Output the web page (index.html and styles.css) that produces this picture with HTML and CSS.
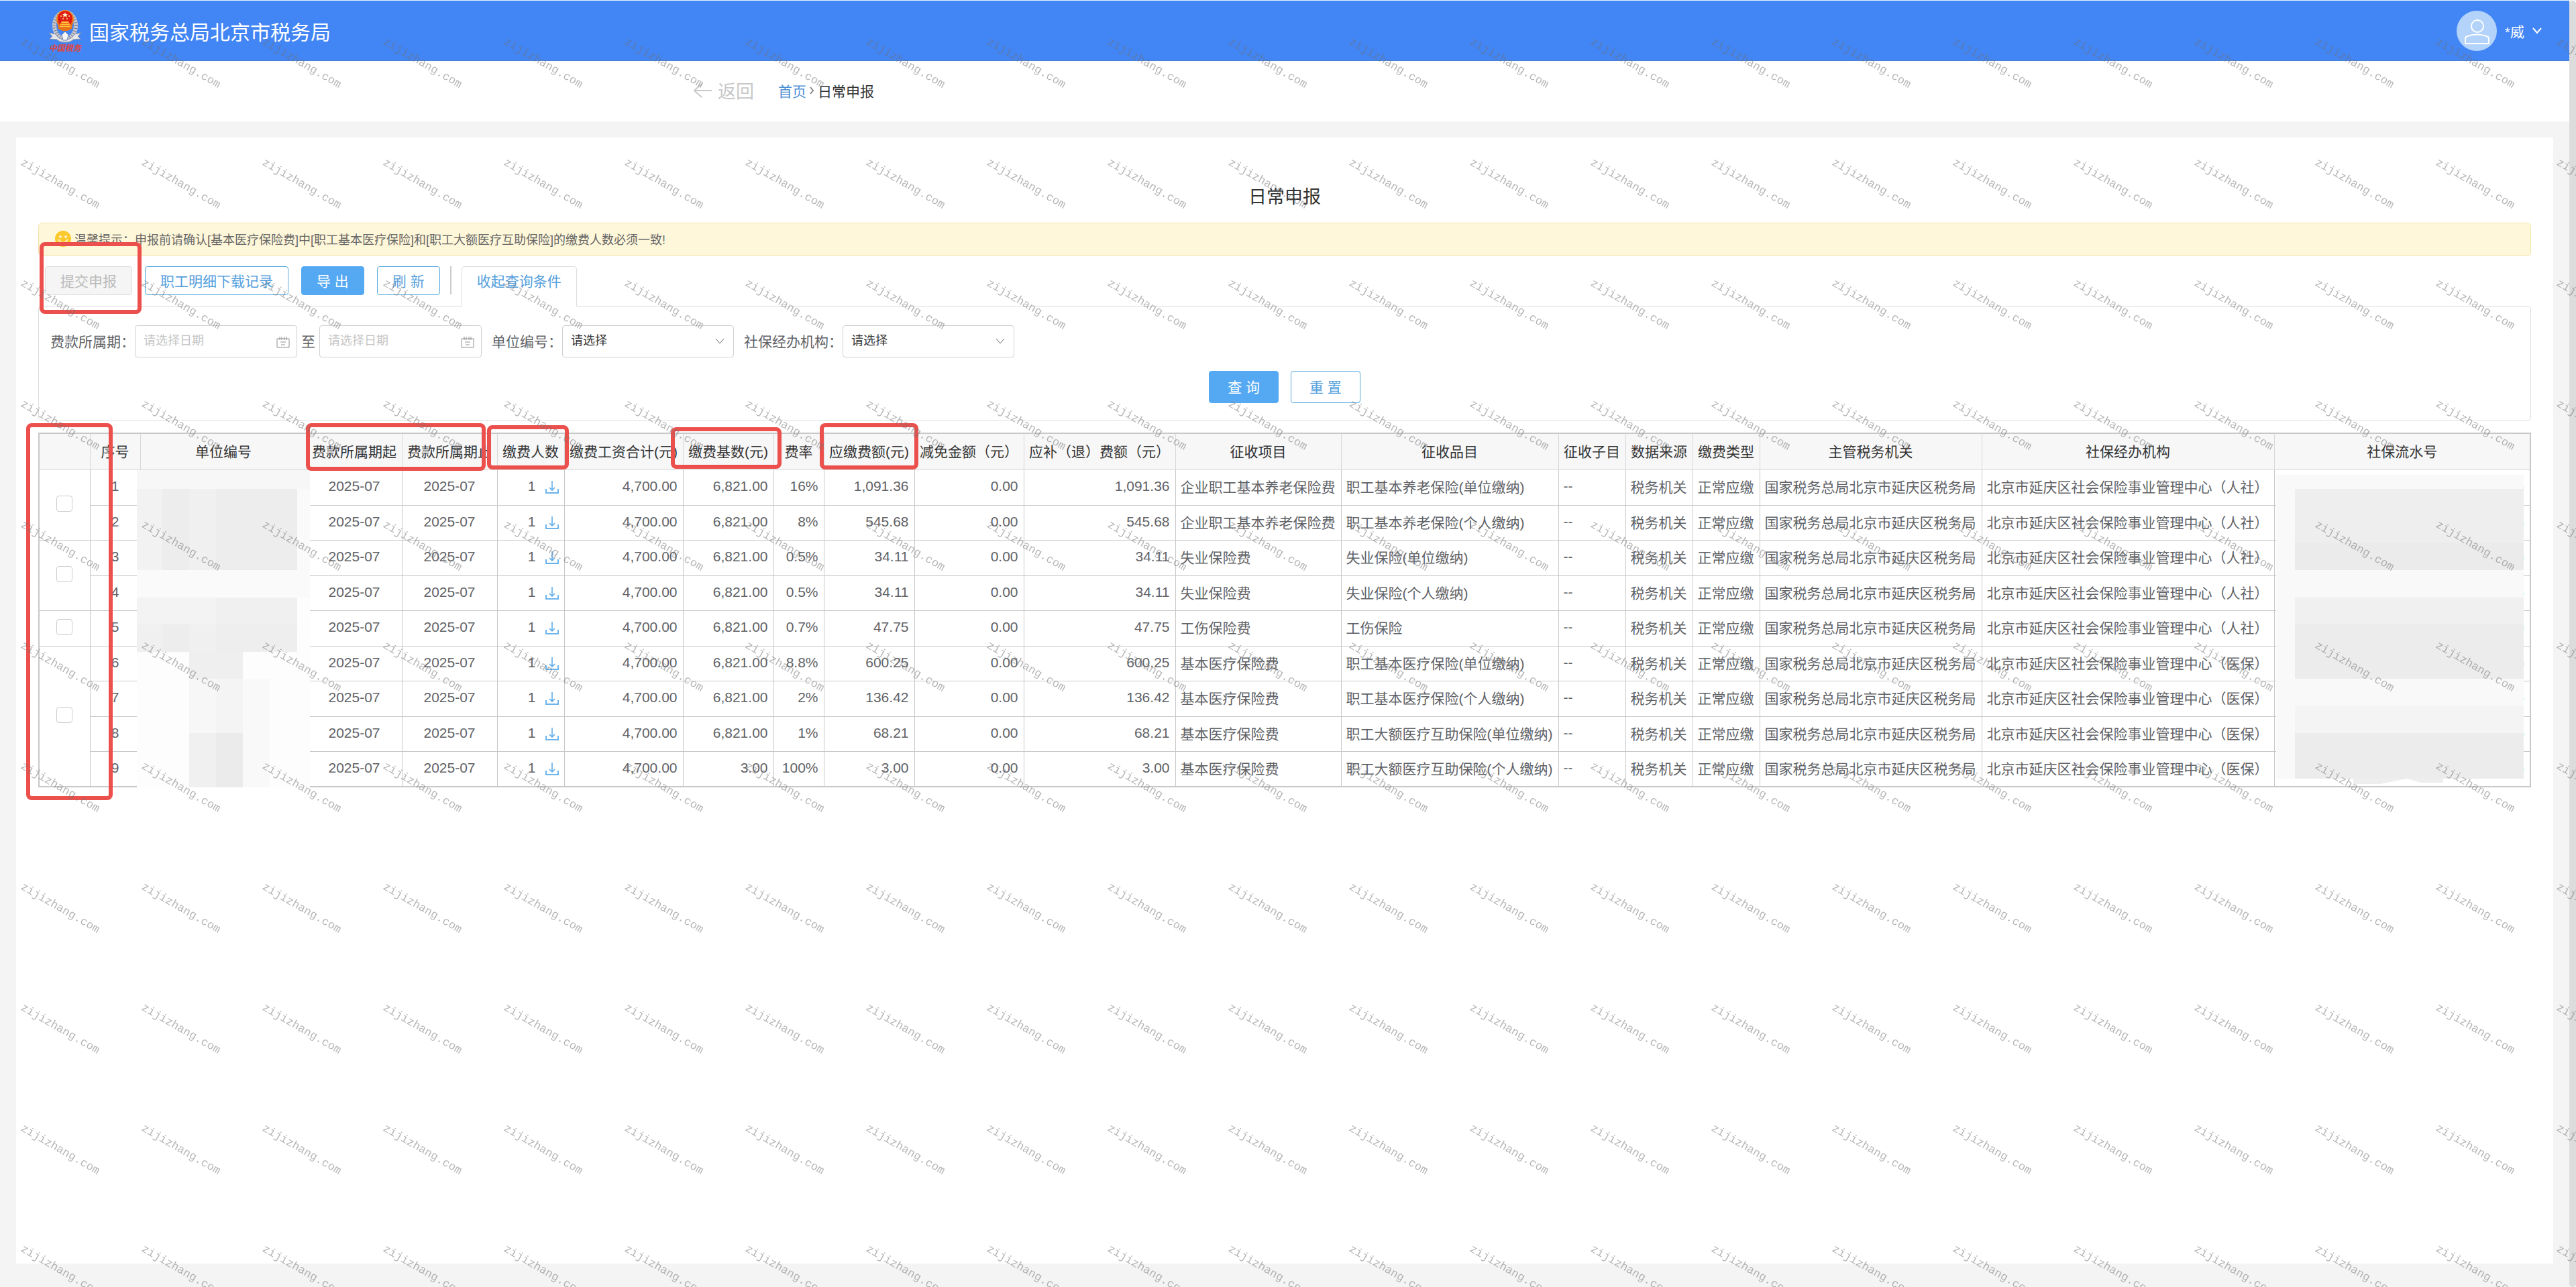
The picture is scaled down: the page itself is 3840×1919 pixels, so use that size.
FILE: index.html
```html
<!DOCTYPE html>
<html lang="zh-CN">
  <head>
    <meta charset="UTF-8" />
    <meta name="viewport" content="width=device-width, initial-scale=1.0" />
    <title>日常申报</title>

    <link rel="stylesheet" href="styles.css">
  </head>

  <body>
    <div class="page">
      <header class="header">
        <svg class="logo" viewBox="0 0 50 64" aria-hidden="true">
          <ellipse cx="25" cy="24" rx="16" ry="20" fill="none" stroke="#c9c9cf" stroke-width="6" />
          <ellipse cx="25" cy="24" rx="16" ry="20" fill="none" stroke="#6d7596" stroke-width="5" stroke-dasharray="1 3" />
          <path d="M1 35l10 2c3 6 8 8 14 8s11-2 14-8l10-2-5 5 4 4-11 1c-3 3-7 4-12 4s-9-1-12-4L2 44l4-4z" fill="#e4e6ea" stroke="#8c90a0" stroke-width="1" />
          <path d="M25 33l5 5-2 8h-6l-2-8z" fill="#f5f5f5" stroke="#6b83bb" stroke-width="1" />
          <ellipse cx="25" cy="15" rx="13" ry="14" fill="#ef8a1c" />
          <path d="M13 17h24l-2 12-6 3h-8l-6-3z" fill="#e8731a" />
          <ellipse cx="25" cy="14" rx="11" ry="12" fill="#e01d14" />
          <path d="M25 4l1 3h3l-2 2 1 3-3-2-3 2 1-3-2-2h3z" fill="#fff3c4" />
          <circle cx="19" cy="10" r="1" fill="#ffe27a" />
          <circle cx="31" cy="10" r="1" fill="#ffe27a" />
          <circle cx="22" cy="14" r="1" fill="#ffe27a" />
          <circle cx="28" cy="14" r="1" fill="#ffe27a" />
          <path d="M20 18h10l1 2h-12zM18 21h14v2H18zM17 24h16v2H17z" fill="#ffc637" />
          <text class="logo-text" x="1" y="62">中国税务</text>
        </svg>
        <h1 class="org">国家税务总局北京市税务局</h1>
        <button class="user" type="button">
          <svg class="avatar" viewBox="0 0 60 60" aria-hidden="true">
            <circle cx="30" cy="30" r="30" fill="#b3d3fa" />
            <circle cx="31" cy="23" r="9" fill="none" stroke="#fff" stroke-width="2" />
            <path d="M13 49v-7q0-3 3-4q14-5 29 0q3 1 3 4v7z" fill="none" stroke="#fff" stroke-width="2" />
          </svg>
          <span class="user-name">*威</span>
          <svg class="user-arrow" viewBox="0 0 14 10" aria-hidden="true">
            <path d="M1 1l6 7 6-7" fill="none" stroke="#fff" stroke-width="2" />
          </svg>
        </button>
      </header>

      <nav class="crumbs">
        <a class="back" href="#">
          <svg class="back-arrow" viewBox="0 0 27 22" aria-hidden="true">
            <path d="M12 1L1 11l11 10M1 11h26" fill="none" stroke="#c8c8c8" stroke-width="2" />
          </svg>
          返回
        </a>
        <a class="home" href="#">首页</a>
        <svg class="crumb-sep" viewBox="0 0 7 12" aria-hidden="true">
          <path d="M1 1l4 5-4 5" fill="none" stroke="#888" stroke-width="2" />
        </svg>
        <span>日常申报</span>
      </nav>

      <main class="panel">
        <h2 class="title">日常申报</h2>

        <p class="notice">
          <svg class="smile" viewBox="0 0 24 24" aria-hidden="true">
            <circle cx="12" cy="12" r="12" fill="#fbc92d" />
            <circle cx="8" cy="9" r="2" fill="#fff3c9" />
            <circle cx="16" cy="9" r="2" fill="#fff3c9" />
            <path d="M5 13q7 10 14 0" fill="none" stroke="#fff3c9" stroke-width="2" />
          </svg>
          温馨提示：申报前请确认[基本医疗保险费]中[职工基本医疗保险]和[职工大额医疗互助保险]的缴费人数必须一致!
        </p>

        <div class="toolbar">
          <button class="btn btn-submit" type="button" disabled>提交申报</button>
          <button class="btn" type="button">职工明细下载记录</button>
          <button class="btn btn-primary" type="button">导 出</button>
          <button class="btn" type="button">刷 新</button>
          <span class="divider"></span>
          <button class="tab" type="button">收起查询条件</button>
          <span class="mark mark-submit"></span>
        </div>

        <form class="filters">
          <div class="fields">
            <label for="dateFrom">费款所属期：</label>
            <span class="field">
              <input class="control" id="dateFrom" type="text" placeholder="请选择日期" />
              <svg class="calendar" viewBox="0 0 20 18" aria-hidden="true">
                <path d="M1 4h18v13H1zM5 1v5M8 1v5M12 1v5M15 1v5M6 9h8M7 13h6" fill="none" stroke="#909090" stroke-width="1" />
              </svg>
            </span>
            <label class="to" for="dateTo">至</label>
            <span class="field">
              <input class="control" id="dateTo" type="text" placeholder="请选择日期" />
              <svg class="calendar" viewBox="0 0 20 18" aria-hidden="true">
                <path d="M1 4h18v13H1zM5 1v5M8 1v5M12 1v5M15 1v5M6 9h8M7 13h6" fill="none" stroke="#909090" stroke-width="1" />
              </svg>
            </span>
            <label class="next" for="unit">单位编号：</label>
            <span class="field field-select">
              <select class="control" id="unit"><option>请选择</option></select>
              <svg class="arrow" viewBox="0 0 14 10" aria-hidden="true">
                <path d="M1 1l6 7 6-7" fill="none" stroke="#666" stroke-width="1" />
              </svg>
            </span>
            <label class="next" for="agency">社保经办机构：</label>
            <span class="field field-select">
              <select class="control" id="agency"><option>请选择</option></select>
              <svg class="arrow" viewBox="0 0 14 10" aria-hidden="true">
                <path d="M1 1l6 7 6-7" fill="none" stroke="#666" stroke-width="1" />
              </svg>
            </span>
          </div>
          <div class="actions">
            <button class="btn btn-large btn-primary" type="button">查 询</button>
            <button class="btn btn-large" type="button">重 置</button>
          </div>
        </form>

        <div class="table-wrap">
          <table class="table">
            <colgroup>
              <col class="w76"><col class="w75"><col class="w248"><col class="w142"><col class="w142">
              <col class="w100"><col class="w177"><col class="w135"><col class="w75"><col class="w135">
              <col class="w163"><col class="w226"><col class="w247"><col class="w324"><col class="w100">
              <col class="w100"><col class="w100"><col class="w331"><col class="w436"><col>
            </colgroup>
            <thead>
              <tr>
                <th></th>
                <th>序号</th>
                <th>单位编号</th>
                <th>费款所属期起</th>
                <th>费款所属期止</th>
                <th>缴费人数</th>
                <th>缴费工资合计(元)</th>
                <th>缴费基数(元)</th>
                <th>费率</th>
                <th>应缴费额(元)</th>
                <th>减免金额（元）</th>
                <th>应补（退）费额（元）</th>
                <th>征收项目</th>
                <th>征收品目</th>
                <th>征收子目</th>
                <th>数据来源</th>
                <th>缴费类型</th>
                <th>主管税务机关</th>
                <th>社保经办机构</th>
                <th>社保流水号</th>
              </tr>
            </thead>
            <tbody id="rows"></tbody>
          </table>

          <!-- masked unit numbers -->
          <svg class="mask mask-unit" viewBox="0 0 258 473" aria-hidden="true">
            <rect width="258" height="473" fill="#fdfdfd" />
            <rect width="258" height="28" fill="#f7f7f7" />
            <rect y="28" width="38" height="121" fill="#f2f2f2" />
            <rect x="38" y="28" width="201" height="121" fill="#ededed" />
            <rect x="78" y="28" width="40" height="121" fill="#f0f0f0" />
            <rect x="239" y="28" width="19" height="121" fill="#fafafa" />
            <rect y="149" width="258" height="41" fill="#fafafa" />
            <rect y="190" width="239" height="40" fill="#f3f3f3" />
            <rect x="118" y="190" width="121" height="40" fill="#f0f0f0" />
            <rect y="230" width="239" height="41" fill="#f0f0f0" />
            <rect x="38" y="230" width="40" height="41" fill="#ededed" />
            <rect x="118" y="230" width="121" height="41" fill="#eee" />
            <rect x="78" y="271" width="80" height="40" fill="#efefef" />
            <rect x="78" y="311" width="120" height="81" fill="#f7f7f7" />
            <rect x="118" y="311" width="40" height="81" fill="#f4f4f4" />
            <rect x="158" y="311" width="40" height="162" fill="#f9f9f9" />
            <rect x="78" y="392" width="40" height="81" fill="#f0f0f0" />
            <rect x="118" y="392" width="40" height="81" fill="#ebebeb" />
          </svg>

          <!-- masked serial numbers -->
          <svg class="mask mask-serial" viewBox="0 0 369 462" aria-hidden="true">
            <rect width="369" height="453" fill="#f9f9f9" />
            <rect x="28" y="21" width="341" height="121" fill="#eee" />
            <rect x="28" y="101" width="341" height="41" fill="#ebebeb" />
            <rect x="28" y="183" width="341" height="40" fill="#f0f0f0" />
            <rect x="28" y="223" width="341" height="81" fill="#ececec" />
            <rect x="28" y="344" width="341" height="41" fill="#f4f4f4" />
            <rect x="28" y="385" width="341" height="68" fill="#ececec" />
            <path d="M115 453h134v6h-34l-20-6-40 8h-40z" fill="#eee" />
          </svg>

          <span class="mark mark-check"></span>
          <span class="mark mark-period"></span>
          <span class="mark mark-people"></span>
          <span class="mark mark-base"></span>
          <span class="mark mark-due"></span>
        </div>
      </main>
    </div>

    <div class="scrollbar"></div>

    <svg class="watermark" aria-hidden="true">
      <defs>
        <pattern id="wm" width="180" height="180" patternUnits="userSpaceOnUse">
          <text class="watermark-text" x="30" y="65" transform="rotate(30 30 65)">zijizhang.com</text>
        </pattern>
      </defs>
      <rect width="100%" height="100%" fill="url(#wm)" />
    </svg>

    <!-- JS -->
    <script>
      // base, rate, due, item, sub item, agency, rows covered by the checkbox
      const data = [
        ['6,821.00', '16%', '1,091.36', '企业职工基本养老保险费', '职工基本养老保险(单位缴纳)', '人社', 2],
        ['6,821.00', '8%', '545.68', '企业职工基本养老保险费', '职工基本养老保险(个人缴纳)', '人社', 0],
        ['6,821.00', '0.5%', '34.11', '失业保险费', '失业保险(单位缴纳)', '人社', 2],
        ['6,821.00', '0.5%', '34.11', '失业保险费', '失业保险(个人缴纳)', '人社', 0],
        ['6,821.00', '0.7%', '47.75', '工伤保险费', '工伤保险', '人社', 1],
        ['6,821.00', '8.8%', '600.25', '基本医疗保险费', '职工基本医疗保险(单位缴纳)', '医保', 4],
        ['6,821.00', '2%', '136.42', '基本医疗保险费', '职工基本医疗保险(个人缴纳)', '医保', 0],
        ['6,821.00', '1%', '68.21', '基本医疗保险费', '职工大额医疗互助保险(单位缴纳)', '医保', 0],
        ['3.00', '100%', '3.00', '基本医疗保险费', '职工大额医疗互助保险(个人缴纳)', '医保', 0],
      ];

      const icon = `<a class="download" href="#" aria-label="下载"><svg viewBox="0 0 20 19">
        <path d="M10 0v14M6 10l4 4 4-4" fill="none" stroke="#55a8ea" stroke-width="1.5" />
        <path d="M1 12v6h18v-6" fill="none" stroke="#6cb4ee" stroke-width="2" /></svg></a>`;

      document.querySelector('#rows').innerHTML = data
        .map(([base, rate, due, item, sub, agency, span], i) => `
          <tr>
            ${span ? `<td class="center" rowspan="${span}"><input class="check" type="checkbox" aria-label="选择第${i + 1}行" /></td>` : ''}
            <td class="center">${i + 1}</td>
            <td></td>
            <td class="center">2025-07</td>
            <td class="center">2025-07</td>
            <td class="num">1${icon}</td>
            <td class="num">4,700.00</td>
            <td class="num">${base}</td>
            <td class="num">${rate}</td>
            <td class="num">${due}</td>
            <td class="num">0.00</td>
            <td class="num">${due}</td>
            <td>${item}</td>
            <td>${sub}</td>
            <td>--</td>
            <td>税务机关</td>
            <td>正常应缴</td>
            <td>国家税务总局北京市延庆区税务局</td>
            <td>北京市延庆区社会保险事业管理中心（${agency}）</td>
            <td class="num"><a class="serial" href="#">5</a></td>
          </tr>`)
        .join('');
    </script>
  </body>
</html>
```
FILE: styles.css
```css
* {
  margin: 0;
  padding: 0;
  box-sizing: border-box;
}
body {
  position: relative;
  display: flex;
  min-height: 100vh;
  background: #f4f4f4;
  color: #333;
  font-family: "Liberation Sans", "Noto Sans CJK SC", sans-serif;
  font-size: 21px;
}
button,
input,
select {
  font-family: inherit;
}
a {
  text-decoration: none;
}
svg {
  display: block;
  flex: none;
}

.page {
  display: flex;
  flex: 1;
  flex-direction: column;
  min-width: 0;
}
.scrollbar {
  width: 10px;
  margin-top: 1px;
  background: #dcdcdc;
  border-radius: 5px;
}

/* header */
.header {
  display: flex;
  align-items: center;
  height: 91px;
  padding: 0 41px 0 72px;
  background: #4285f4;
  border-top: 1px solid #e4f3fb;
  border-bottom: 1px solid #4a80d0;
  color: #fff;
}
.logo {
  width: 50px;
  height: 64px;
}
.logo-text {
  fill: #e0443c;
  font-size: 12px;
  font-style: italic;
  font-weight: 700;
}
.org {
  flex: 1;
  margin-left: 11px;
  font-size: 30px;
  font-weight: 400;
}
.user {
  display: flex;
  align-items: center;
  background: none;
  border: 0;
  color: inherit;
  font-size: 21px;
}
.avatar {
  width: 60px;
  height: 60px;
}
.user-name {
  margin: 0 12px;
}
.user-arrow {
  width: 14px;
  height: 10px;
}

/* breadcrumb */
.crumbs {
  display: flex;
  align-items: center;
  height: 90px;
  padding: 0 0 3px 27%;
  background: #fff;
}
.back {
  display: flex;
  align-items: center;
  gap: 9px;
  margin-right: 36px;
  color: #c8c8c8;
  font-size: 27px;
}
.back-arrow {
  width: 27px;
  height: 22px;
}
.home {
  color: #4a8fd4;
}
.crumb-sep {
  width: 7px;
  height: 12px;
  margin: 0 5px;
}

/* content */
.panel {
  flex: 1;
  margin: 24px 24px 35px;
  padding: 64px 33px 0;
  background: #fff;
}
.title {
  height: 63px;
  font-size: 27px;
  font-weight: 400;
  line-height: 50px;
  text-align: center;
}
.notice {
  display: flex;
  align-items: center;
  gap: 5px;
  height: 50px;
  padding: 0 24px 2px;
  background: #fff7d9;
  border: 1px solid #f3e3a9;
  border-radius: 6px;
  color: #666;
  font-size: 18px;
}
.smile {
  width: 24px;
  height: 24px;
}

.toolbar {
  position: relative;
  display: flex;
  gap: 19px;
  margin-top: 15px;
  padding-left: 10px;
}
.btn {
  height: 43px;
  padding: 0 22px 2px;
  background: #fff;
  border: 1px solid #55a8dd;
  border-radius: 4px;
  color: #55a0dc;
  font-size: 21px;
}
.btn-submit {
  background: #f5f5f5;
  border-color: #ddd;
  color: #bbb;
}
.btn-primary {
  background: #54a9f2;
  border-color: #54a9f2;
  color: #fff;
}
.btn-large {
  height: 48px;
  padding: 0 27px 2px;
}
.divider {
  width: 2px;
  height: 42px;
  margin: 0 -4px;
  background: #ccc;
}
/* covers the top border of the filter box */
.tab {
  z-index: 1;
  height: 60px;
  margin-bottom: -1px;
  padding: 0 22px 19px;
  background: #fff;
  border: 1px solid #ddd;
  border-bottom: 0;
  border-radius: 5px 5px 0 0;
  color: #55a0dc;
  font-size: 21px;
}

.filters {
  padding: 28px 17px 25px;
  border: 1px solid #ddd;
  border-radius: 5px;
}
.fields {
  display: flex;
  align-items: center;
  color: #606266;
}
.fields label {
  padding-bottom: 2px;
}
.to {
  margin: 0 6px;
}
.next {
  margin-left: 15px;
}
.field {
  position: relative;
  width: 242px;
}
.field-select {
  width: 256px;
}
.control {
  width: 100%;
  height: 48px;
  padding: 0 12px 2px;
  appearance: none;
  background: #fff;
  border: 1px solid #d0d0d0;
  border-radius: 4px;
  color: #333;
  font-size: 18px;
}
.control::placeholder {
  color: #c4c4c4;
}
.calendar,
.arrow {
  position: absolute;
  top: 16px;
  right: 11px;
  width: 20px;
  height: 18px;
  pointer-events: none;
}
.arrow {
  top: 19px;
  right: 14px;
  width: 14px;
  height: 10px;
}
.actions {
  display: flex;
  justify-content: center;
  gap: 18px;
  margin-top: 20px;
}

/* table */
.table-wrap {
  position: relative;
  margin-top: 18px;
}
.table {
  width: 100%;
  table-layout: fixed;
  border: 2px solid #c8c8c8;
  border-collapse: collapse;
}
.table th,
.table td {
  padding: 0 7px 3px;
  border: 1px solid #c8c8c8;
  white-space: nowrap;
}
.table th {
  height: 54px;
  background: #f7f7f7;
  border-color: #d8d8d8;
  font-weight: 400;
}
.table td {
  height: 53px;
  color: #606266;
}
.table tr:nth-child(even) td {
  height: 52px;
}
.table .center {
  text-align: center;
}
.table .num {
  padding-right: 8px;
  text-align: right;
}
.w75 { width: 75px; }
.w76 { width: 76px; }
.w100 { width: 100px; }
.w135 { width: 135px; }
.w142 { width: 142px; }
.w163 { width: 163px; }
.w177 { width: 177px; }
.w226 { width: 226px; }
.w247 { width: 247px; }
.w248 { width: 248px; }
.w324 { width: 324px; }
.w331 { width: 331px; }
.w436 { width: 436px; }

.check {
  display: block;
  width: 24px;
  height: 24px;
  margin: 0 auto;
  appearance: none;
  background: #fff;
  border: 1px solid #ccc;
  border-radius: 4px;
}
.download {
  display: inline-block;
  margin-left: 14px;
  vertical-align: -4px;
}
.download svg {
  width: 20px;
  height: 19px;
}
.serial {
  color: #3c6fa8;
}

.mask {
  position: absolute;
}
.mask-unit {
  top: 56px;
  left: 147px;
  width: 258px;
  height: 473px;
}
.mask-serial {
  top: 63px;
  right: 11px;
  width: 369px;
  height: 462px;
}

/* red callouts */
.mark {
  position: absolute;
  border: 6px solid #ec504c;
  border-radius: 8px;
  pointer-events: none;
}
.mark-submit {
  z-index: 2;
  top: -36px;
  left: 2px;
  width: 152px;
  height: 107px;
}
.mark-check {
  top: -14px;
  left: -18px;
  width: 129px;
  height: 562px;
}
.mark-period {
  top: -14px;
  left: 399px;
  width: 268px;
  height: 71px;
}
.mark-people {
  top: -11px;
  left: 669px;
  width: 122px;
  height: 66px;
}
.mark-base {
  top: -8px;
  left: 943px;
  width: 165px;
  height: 62px;
}
.mark-due {
  top: -14px;
  left: 1165px;
  width: 147px;
  height: 69px;
}

.watermark {
  position: absolute;
  z-index: 3;
  top: 0;
  left: 0;
  width: 100%;
  height: 100%;
  pointer-events: none;
}
.watermark-text {
  fill: rgba(110, 110, 110, 0.5);
  font-family: "Liberation Mono", monospace;
  font-size: 17px;
}
```
